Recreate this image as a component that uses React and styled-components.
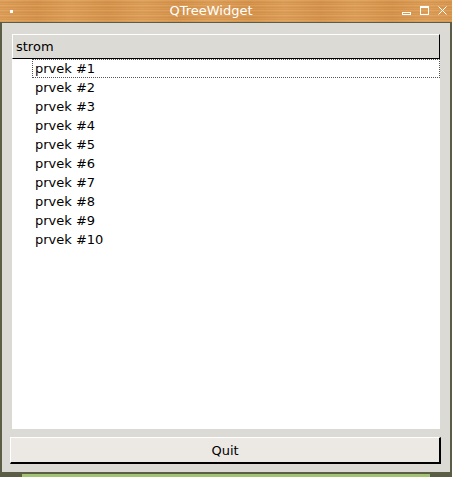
import styled, { createGlobalStyle } from 'styled-components';

const GlobalStyle = createGlobalStyle`
  html, body {
    margin: 0;
    padding: 0;
    background: #5c5d45;
  }
  body {
    font-family: "DejaVu Sans", sans-serif;
    font-size: 13px;
  }
`;

const Window = styled.div`
  width: 452px;
  height: 477px;
  display: flex;
  flex-direction: column;
  background: #5c5d45;
  overflow: hidden;
`;

const TitleBar = styled.div`
  height: 22px;
  flex: none;
  display: flex;
  align-items: center;
  border-bottom: 1px solid #5c5d45;
  background:
    repeating-linear-gradient(
      180deg,
      rgba(255, 220, 160, 0.18) 0px,
      rgba(255, 220, 160, 0.18) 1px,
      rgba(160, 90, 30, 0.12) 2px,
      rgba(255, 230, 170, 0.1) 4px,
      rgba(150, 80, 20, 0.14) 5px
    ),
    repeating-linear-gradient(
      90deg,
      rgba(255, 210, 140, 0.12) 0px,
      rgba(190, 110, 40, 0.12) 37px,
      rgba(255, 210, 140, 0.12) 71px
    ),
    #d6944d;
`;

const MenuSlot = styled.div`
  width: 22px;
  height: 22px;
  display: flex;
  align-items: center;
  padding-left: 10px;
  box-sizing: border-box;
`;

const MenuDot = styled.span`
  width: 3px;
  height: 3px;
  background: #fff;
`;

const Title = styled.div`
  flex: 1;
  text-align: center;
  color: #fff;
  font-size: 13px;
  line-height: 22px;
`;

const Controls = styled.div`
  width: 52px;
  display: flex;
  align-items: center;
  gap: 8px;
  padding-left: 2px;
  box-sizing: border-box;
`;

const Body = styled.div`
  flex: 1;
  margin: 0 2px;
  background: #dcdad5;
  display: flex;
  flex-direction: column;
  padding: 11px 0 8px;
  box-sizing: border-box;
`;

const Tree = styled.div`
  margin: 0 10px 0 10px;
  flex: 1;
  display: flex;
  flex-direction: column;
`;

const Header = styled.div`
  height: 23px;
  background: #dcdad5;
  border-top: 1px solid #fff;
  border-left: 1px solid #fff;
  border-right: 1px solid #000;
  border-bottom: 1px solid #000;
  padding-left: 3px;
  line-height: 23px;
  color: #000;
`;

const Rows = styled.div`
  flex: 1;
  background: #fff;
  display: flex;
  flex-direction: column;
`;

const Row = styled.div`
  height: 19px;
  line-height: 19px;
  box-sizing: border-box;
  color: #000;
  margin-left: 20px;
  padding-left: ${(p) => (p.$focus ? 2 : 3)}px;
  border: ${(p) => (p.$focus ? '1px dotted #555' : '0')};
  line-height: ${(p) => (p.$focus ? 17 : 19)}px;
`;

const Quit = styled.button`
  margin: 8px 9px 0 8px;
  height: 27px;
  flex: none;
  background: #ece9e4;
  border-top: 1px solid #fff;
  border-left: 1px solid #fff;
  border-right: 2px solid #000;
  border-bottom: 2px solid #000;
  font-family: "DejaVu Sans", sans-serif;
  font-size: 13px;
  color: #000;
  padding: 0;
`;

const BottomEdge = styled.div`
  height: 5px;
  flex: none;
  display: flex;
  align-items: flex-end;
  padding: 0 22px;
`;

const Desktop = styled.div`
  flex: 1;
  height: 3px;
  background: #a2c274;
`;

const items = Array.from({ length: 10 }, (_, i) => `prvek #${i + 1}`);

export default function App() {
  return (
    <>
      <GlobalStyle />
      <Window>
        <TitleBar>
          <MenuSlot>
            <MenuDot />
          </MenuSlot>
          <Title>QTreeWidget</Title>
          <Controls>
            <svg width="10" height="10" viewBox="0 0 10 10">
              <rect x="0.5" y="6.5" width="8" height="2" fill="none" stroke="#fff" />
            </svg>
            <svg width="10" height="10" viewBox="0 0 10 10">
              <rect x="0.5" y="0.5" width="8" height="8" fill="none" stroke="#fff" />
              <line x1="0" y1="1.5" x2="9" y2="1.5" stroke="#fff" />
            </svg>
            <svg width="10" height="10" viewBox="0 0 10 10">
              <path d="M0.5 0.5 L8.5 8.5 M8.5 0.5 L0.5 8.5" stroke="#fff" strokeWidth="1" />
            </svg>
          </Controls>
        </TitleBar>
        <Body>
          <Tree>
            <Header>strom</Header>
            <Rows>
              {items.map((t, i) => (
                <Row key={t} $focus={i === 0}>
                  {t}
                </Row>
              ))}
            </Rows>
          </Tree>
          <Quit>Quit</Quit>
        </Body>
        <BottomEdge>
          <Desktop />
        </BottomEdge>
      </Window>
    </>
  );
}
